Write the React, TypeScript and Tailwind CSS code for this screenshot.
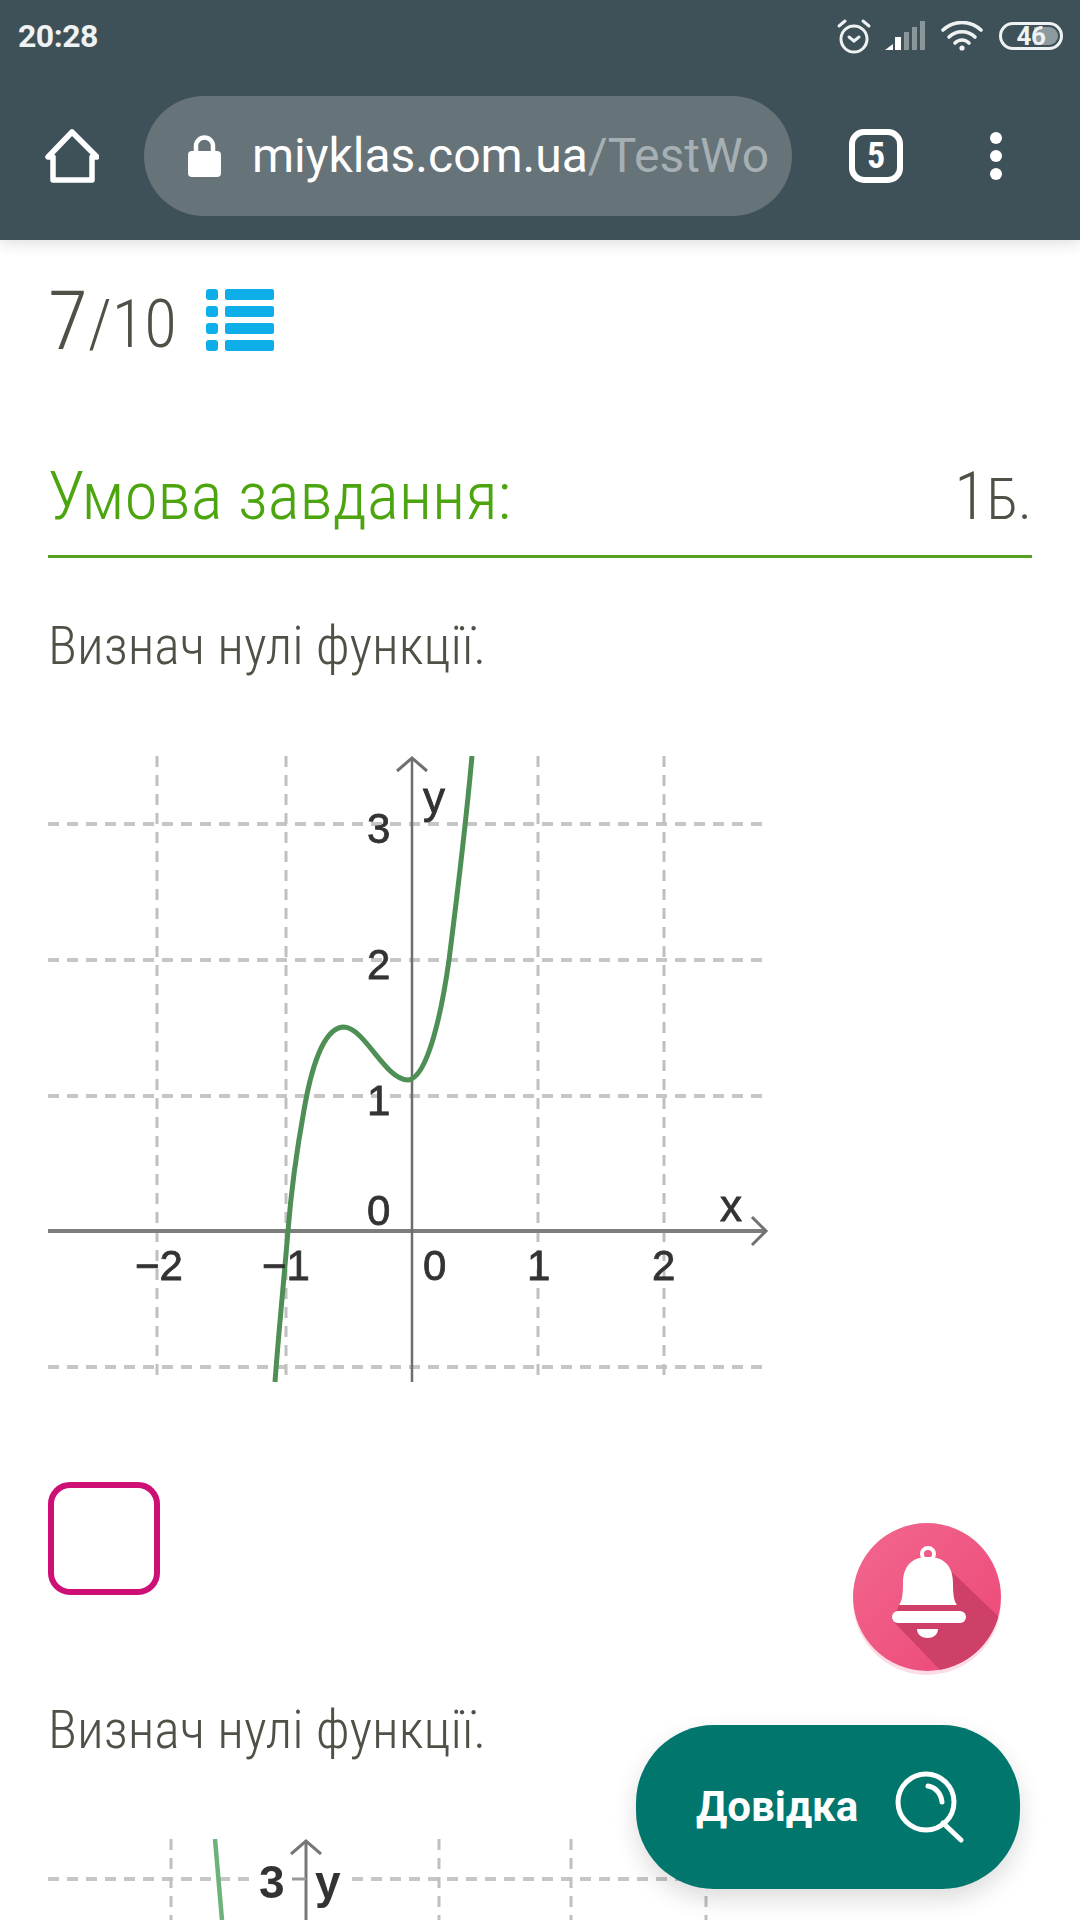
const condensed = { fontFamily: 'Roboto, sans-serif' };

function Graph1() {
  const h = [824, 960, 1096, 1367];
  const v = [157, 286, 538, 664];
  return (
    <svg viewBox="48 756 730 630" className="w-[730px] h-[630px] block blur-[0.6px]">
      {h.map((y) => (
        <line key={y} x1="48" x2="762" y1={y} y2={y} stroke="#c6c6c6" strokeWidth="4" strokeDasharray="11 8" />
      ))}
      {v.map((x) => (
        <line key={x} x1={x} x2={x} y1="756" y2="1382" stroke="#c0c0c0" strokeWidth="3" strokeDasharray="11 8" />
      ))}
      <line x1="48" x2="765" y1="1231" y2="1231" stroke="#7d7d7d" strokeWidth="4" />
      <line x1="412" x2="412" y1="758" y2="1382" stroke="#6e6e6e" strokeWidth="2.5" />
      <path d="M397 771 L412 758 L427 771" fill="none" stroke="#707070" strokeWidth="3" />
      <path d="M752 1217 L766 1231 L752 1245" fill="none" stroke="#707070" strokeWidth="3" />
      <path
        d="M472 756 C468 800 463 850 449 960 C442 1010 428 1078 408 1080 C385 1080 365 1028 344 1027 C322 1027 310 1075 304 1110 C295 1160 290 1205 288 1231 C283 1290 278 1340 275 1382"
        fill="none"
        stroke="#4d8f55"
        strokeWidth="5"
      />
      <g fill="#333" stroke="#333" strokeWidth="0.8" fontSize="42" style={{ fontFamily: '"Liberation Sans", sans-serif' }}>
        <text x="367" y="843">3</text>
        <text x="367" y="979">2</text>
        <text x="367" y="1115">1</text>
        <text x="367" y="1225">0</text>
        <text x="423" y="813" fontSize="44">y</text>
        <text x="720" y="1221" fontSize="44">x</text>
        <text x="135" y="1280">−2</text>
        <text x="262" y="1280">−1</text>
        <text x="423" y="1280">0</text>
        <text x="527" y="1280">1</text>
        <text x="652" y="1280">2</text>
      </g>
    </svg>
  );
}

function Graph2() {
  return (
    <svg viewBox="48 1839 730 81" className="w-[730px] h-[81px] block blur-[0.6px]">
      <line x1="48" x2="778" y1="1879" y2="1879" stroke="#c6c6c6" strokeWidth="4" strokeDasharray="11 8" />
      {[171, 439, 571, 706].map((x) => (
        <line key={x} x1={x} x2={x} y1="1839" y2="1920" stroke="#c0c0c0" strokeWidth="3" strokeDasharray="11 8" />
      ))}
      <rect x="254" y="1860" width="92" height="60" fill="#fff" />
      <line x1="306" x2="306" y1="1841" y2="1920" stroke="#777" strokeWidth="3" />
      <line x1="292" x2="306" y1="1879" y2="1879" stroke="#999" strokeWidth="3" />
      <path d="M291 1854 L306 1841 L321 1854" fill="none" stroke="#777" strokeWidth="3" />
      <line x1="215" x2="222" y1="1839" y2="1920" stroke="#6db27a" strokeWidth="4.5" />
      <g fill="#333" fontSize="46" fontWeight="700" style={{ fontFamily: '"Liberation Sans", sans-serif' }}>
        <text x="259" y="1898">3</text>
        <text x="315" y="1898">y</text>
      </g>
    </svg>
  );
}

export default function App() {
  return (
    <div className="relative w-[1080px] h-[1920px] overflow-hidden bg-white" style={condensed}>
      <header className="relative z-10 h-[240px] bg-[#3e5058] shadow-[0_4px_14px_rgba(0,0,0,0.12)]">
        <div className="h-[72px] flex items-center justify-between pl-[18px] pr-[17px]">
          <span className="text-[32px] font-bold text-[#eef2f3] tracking-[-0.5px]">20:28</span>
          <div className="flex items-center">
            <svg viewBox="0 0 36 36" className="w-[36px] h-[36px]" fill="none" stroke="#eef2f3" strokeWidth="3" strokeLinecap="round">
              <circle cx="18" cy="21" r="13" />
              <path d="M13 19 L18 23 L23 19" />
              <path d="M3 8 L9 3" />
              <path d="M33 8 L27 3" />
            </svg>
            <svg viewBox="0 0 40 30" className="ml-[13px] w-[40px] h-[30px]">
              <path d="M0 29 L8 23 V29Z" fill="#fff" />
              <rect x="10" y="16" width="6" height="13" fill="#fff" />
              <rect x="19" y="11" width="5" height="18" fill="#fff" opacity="0.4" />
              <rect x="27" y="6" width="5" height="23" fill="#fff" opacity="0.4" />
              <rect x="35" y="0" width="5" height="29" fill="#fff" opacity="0.4" />
            </svg>
            <svg viewBox="0 0 42 30" className="ml-[16px] w-[42px] h-[30px]" fill="none" stroke="#eef2f3" strokeWidth="3.6" strokeLinecap="round">
              <path d="M2 9 C13 -1 29 -1 40 9" />
              <path d="M8 16 C15 9 27 9 34 16" />
              <path d="M14 22 C18 18 24 18 28 22" />
              <circle cx="21" cy="27" r="2.6" fill="#eef2f3" stroke="none" />
            </svg>
            <div className="relative ml-[16px] w-[64px] h-[28px] rounded-full border-[3px] border-[#eef2f3] flex items-center justify-center overflow-hidden">
              <div className="absolute right-[2px] top-[2px] bottom-[2px] w-[24px] rounded-r-full bg-[#8d9a9f]" />
              <span className="relative text-[26px] leading-none font-bold text-[#eef2f3] tracking-[-0.5px]">46</span>
            </div>
          </div>
        </div>
        <div className="mt-[24px] h-[120px] flex items-center pl-[45px]">
          <svg viewBox="0 0 54 54" className="w-[54px] h-[54px]" fill="none" stroke="#fff" strokeWidth="5.5" strokeLinejoin="round" strokeLinecap="round">
            <path d="M27 3 L3 28 H8 V51 H47 V28 H52 Z" />
          </svg>
          <div className="ml-[45px] w-[648px] h-[120px] rounded-full bg-[#667378] flex items-center pl-[44px]">
            <svg viewBox="0 0 33 42" className="w-[33px] h-[42px] shrink-0">
              <path d="M8 18 V11 A8.5 8.5 0 0 1 25 11 V18" fill="none" stroke="#fff" strokeWidth="4.5" />
              <rect x="0" y="16" width="33" height="26" rx="4" fill="#fff" />
            </svg>
            <div className="ml-[31px] text-[48px] leading-none whitespace-nowrap">
              <span className="text-white">miyklas.com.ua</span>
              <span className="text-[#a6b0b4]">/TestWo</span>
            </div>
          </div>
          <div className="ml-[57px] w-[54px] h-[54px] rounded-[15px] border-[6px] border-white flex items-center justify-center text-white text-[36px] font-bold font-stretch-condensed leading-none">5</div>
          <div className="ml-[87px] flex flex-col gap-[6px]">
            <span className="w-[12px] h-[12px] rounded-full bg-white" />
            <span className="w-[12px] h-[12px] rounded-full bg-white" />
            <span className="w-[12px] h-[12px] rounded-full bg-white" />
          </div>
        </div>
      </header>

      <main className="px-[48px] pt-[34px] font-light font-stretch-condensed text-[#4f5046]">
        <div className="flex items-end h-[92px]">
          <span className="text-[82px] leading-[90px]">7</span>
          <span className="text-[67px] leading-[84px]">/10</span>
          <svg viewBox="0 0 68 62" className="ml-[29px] mb-[15px] w-[68px] h-[62px]" fill="#0eaee8">
            {[0, 17, 34, 51].map((y) => (
              <g key={y}>
                <rect x="0" y={y} width="12" height="11" rx="3" />
                <rect x="19" y={y} width="49" height="11" rx="2" />
              </g>
            ))}
          </svg>
        </div>
        <div className="mt-[90px] flex items-baseline justify-between h-[102px] border-b-[3px] border-[#55a020]">
          <span className="text-[67.5px] leading-[80px] text-[#4ca50f]">Умова завдання:</span>
          <span className="text-[58px] leading-[80px]"><span className="text-[66px]">1</span>Б.</span>
        </div>
        <p className="mt-[53px] text-[54px] leading-[70px]">Визнач нулі функції.</p>
        <div className="mt-[75px]"><Graph1 /></div>
        <div className="mt-[96px] w-[112px] h-[113px] rounded-[22px] border-[6px] border-[#ce0f76]" />
        <p className="mt-[100px] text-[54px] leading-[70px]">Визнач нулі функції.</p>
        <div className="mt-[74px]"><Graph2 /></div>
      </main>

      <div className="absolute left-[853px] top-[1523px] w-[148px] h-[148px] rounded-full overflow-hidden bg-gradient-to-br from-[#f2678f] to-[#ec4677] shadow-[0_4px_0_rgba(240,80,127,0.2)]">
        <svg viewBox="0 0 148 148" className="w-full h-full">
          <path d="M100 50 L148 96 V148 H88 L40 98 L46 82 Z" fill="#cf4069" />
          <circle cx="75" cy="31" r="6" fill="none" stroke="#fff" strokeWidth="4" />
          <path d="M75 34 C58 34 50 44 50 60 C50 72 49 78 46 82 H104 C101 78 100 72 100 60 C100 44 92 34 75 34Z" fill="#fff" />
          <rect x="39" y="88" width="74" height="12" rx="6" fill="#fff" />
          <path d="M64 106 H85 C85 118 64 118 64 106Z" fill="#fff" />
        </svg>
      </div>

      <div className="absolute left-[636px] top-[1725px] w-[384px] h-[164px] rounded-[78px] bg-[#00766c] shadow-[0_10px_24px_rgba(0,0,0,0.14)] flex items-center pl-[60px]">
        <span className="text-[42px] leading-none font-bold text-white">Довідка</span>
        <svg viewBox="0 0 72 72" className="ml-[34px] w-[72px] h-[72px]" fill="none" stroke="#fff" strokeWidth="5" strokeLinecap="round">
          <circle cx="34" cy="31" r="28" />
          <path d="M36 15 C43 16 49 22 50 31" />
          <path d="M51 52 L69 69" />
        </svg>
      </div>
    </div>
  );
}
